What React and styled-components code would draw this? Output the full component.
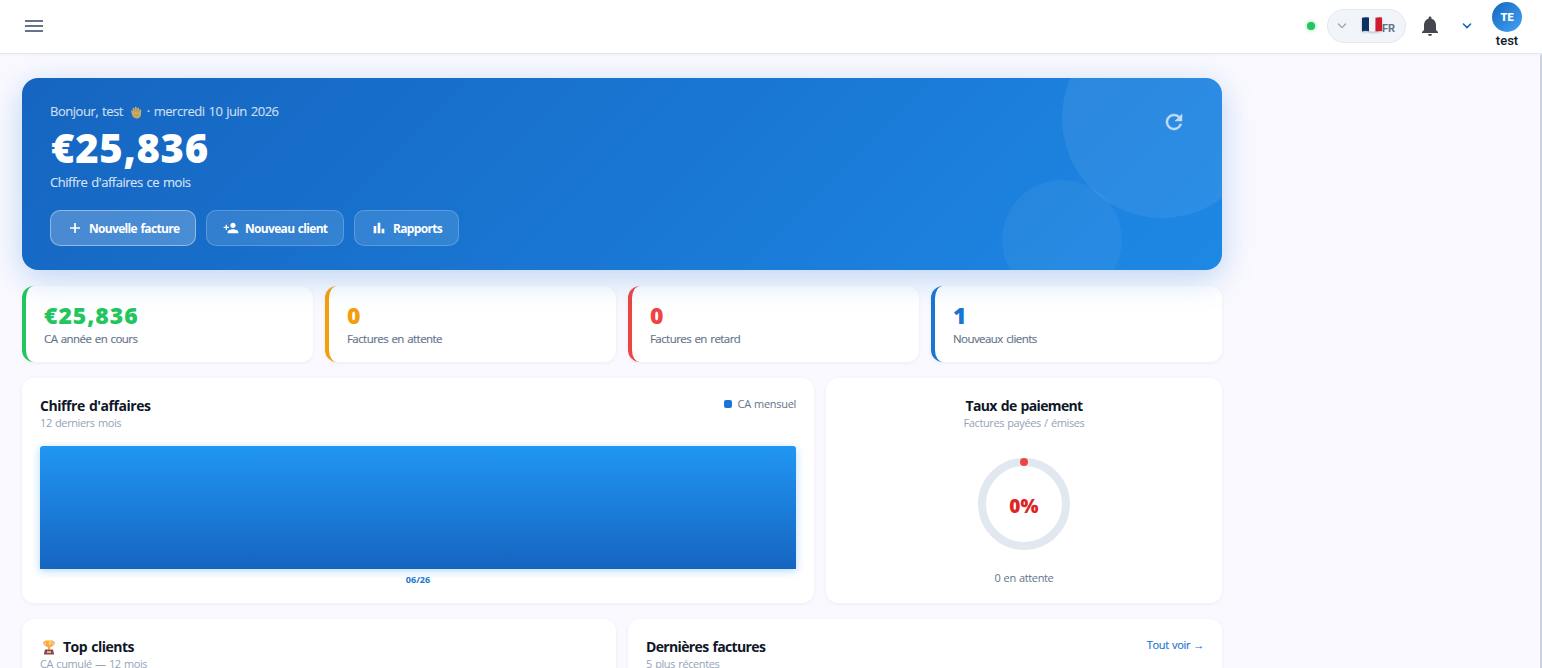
import React from 'react';
import styled, { createGlobalStyle } from 'styled-components';
import {
  MdBarChart,
  MdMenu,
  MdNotifications,
  MdPersonAdd,
} from 'react-icons/md';

const GlobalStyle = createGlobalStyle`
  * {
    box-sizing: border-box;
  }

  html, body, #root {
    height: 100%;
  }

  body {
    margin: 0;
    overflow: hidden;
    background: #faf9ff;
    font-family: 'Open Sans', 'Noto Sans', sans-serif;
    font-size: 13px;
    color: #0f172a;
  }
`;

const Page = styled.div`
  display: flex;
  flex-direction: column;
  height: 668px;
`;

const TopBar = styled.header`
  display: flex;
  flex: none;
  align-items: center;
  justify-content: space-between;
  height: 54px;
  padding: 0 20px 2px 22px;
  background: #fff;
  border-bottom: 1px solid #e2e8f0;
  box-shadow: 0 1px 3px rgba(0, 0, 0, 0.04);
  font-family: Roboto, sans-serif;
`;

const IconButton = styled.button`
  display: flex;
  padding: 0;
  border: none;
  background: none;
  color: ${(props) => props.$color};
  opacity: ${(props) => props.$opacity || 1};
  cursor: pointer;
`;

const TopActions = styled.div`
  display: flex;
  align-items: center;
`;

const StatusDot = styled.span`
  width: 8px;
  height: 8px;
  margin-right: 12px;
  border-radius: 50%;
  background: #22c55e;
  box-shadow: 0 0 4px rgba(34, 197, 94, 0.55);
`;

const LangPill = styled.div`
  display: flex;
  align-items: center;
  width: 79px;
  height: 34px;
  margin-right: 12px;
  padding-left: 9px;
  border: 1px solid #e2e8f0;
  border-radius: 17px;
  background: #f1f5f9;
`;

const Flag = styled.svg`
  margin: 0 0 3px 15px;
  filter: drop-shadow(0 1px 1px rgba(0, 0, 0, 0.25));
`;

const LangCode = styled.span`
  padding-top: 6px;
  font-size: 11px;
  font-weight: 700;
  line-height: 14px;
  letter-spacing: -0.1px;
  color: #64748b;
`;

const ChevronWrap = styled.span`
  display: flex;
  margin: 0 20px 0 20px;
`;

const User = styled.div`
  display: flex;
  flex-direction: column;
  align-items: center;
  width: 30px;
  margin-top: -1px;
`;

const Avatar = styled.div`
  width: 30px;
  height: 30px;
  border-radius: 50%;
  background: linear-gradient(135deg, #1565c0, #42a5f5);
  color: #fff;
  font-size: 11px;
  font-weight: 900;
  line-height: 31px;
  text-align: center;
`;

const UserName = styled.span`
  font-size: 13px;
  font-weight: 500;
  line-height: 16px;
  margin-top: 1px;
`;

const Body = styled.div`
  display: flex;
  flex: 1;
  justify-content: space-between;
  min-height: 0;
`;

const ScrollThumb = styled.div`
  width: 2px;
  background: #cbd5e1;
  border-radius: 2px 0 0 0;
`;

const Main = styled.main`
  width: 1280px;
  height: 614px;
  padding: 24px 58px 0 22px;
  overflow: hidden;
`;

const Hero = styled.section`
  position: relative;
  z-index: 1;
  height: 192px;
  padding: 24px 28px;
  border-radius: 16px;
  background: linear-gradient(135deg, #1565c0 0%, #1976d2 50%, #1e88e5 100%);
  box-shadow: 0 8px 32px rgba(25, 118, 210, 0.28);
  color: #fff;
`;

const Circles = styled.div`
  position: absolute;
  inset: 0;
  overflow: hidden;
  border-radius: 16px;

  &::before,
  &::after {
    content: '';
    position: absolute;
    border-radius: 50%;
  }

  &::before {
    top: -60px;
    right: -40px;
    width: 200px;
    height: 200px;
    background: rgba(255, 255, 255, 0.07);
  }

  &::after {
    bottom: -30px;
    right: 100px;
    width: 120px;
    height: 120px;
    background: rgba(255, 255, 255, 0.05);
  }
`;

const HeroTop = styled.div`
  position: relative;
  display: flex;
  justify-content: space-between;
`;

const RefreshWrap = styled.div`
  padding: 8px 8px 0 0;
`;

const Greeting = styled.div`
  display: flex;
  align-items: center;
  height: 18px;
  font-size: 13px;
  letter-spacing: -0.48px;
  word-spacing: 1px;
  color: rgba(255, 255, 255, 0.75);
  -webkit-text-stroke: 0.2px rgba(255, 255, 255, 0.6);
  white-space: pre;

  svg {
    margin: 2px 5px 0 7px;
    opacity: 0.8;
  }
`;

const Amount = styled.div`
  height: 53px;
  padding-left: 1px;
  font-size: 40px;
  font-weight: 800;
  line-height: 56px;
  letter-spacing: 0.7px;
`;

const HeroSub = styled.div`
  height: 18px;
  font-size: 13px;
  line-height: 18px;
  letter-spacing: -0.48px;
  word-spacing: 1px;
  color: rgba(255, 255, 255, 0.8);
  -webkit-text-stroke: 0.2px rgba(255, 255, 255, 0.6);
`;

const HeroActions = styled.div`
  position: relative;
  display: flex;
  gap: 10px;
  margin-top: 19px;
`;

const HeroButton = styled.button`
  display: flex;
  align-items: center;
  gap: 6px;
  width: ${(props) => props.$width}px;
  height: 36px;
  padding: 0 0 0 16px;
  border: 1px solid rgba(255, 255, 255, ${(props) => (props.$primary ? 0.4 : 0.2)});
  border-radius: 10px;
  background: rgba(255, 255, 255, ${(props) => (props.$primary ? 0.22 : 0.12)});
  color: #fff;
  font-family: inherit;
  font-size: 12px;
  font-weight: 700;
  letter-spacing: -0.68px;
  word-spacing: 1px;
  white-space: nowrap;
  cursor: pointer;
`;

const KpiGrid = styled.section`
  display: grid;
  grid-template-columns: repeat(4, 1fr);
  gap: 12px;
  margin-top: 16px;
`;

const KpiCard = styled.div`
  height: 76px;
  padding: 14px 18px;
  border-left: 4px solid ${(props) => props.$color};
  border-radius: 12px;
  background: #fff;
  box-shadow: 0 1px 4px rgba(0, 0, 0, 0.06);
`;

const KpiValue = styled.div`
  height: 30px;
  font-size: 23px;
  font-weight: 800;
  line-height: 30px;
  letter-spacing: 0.95px;
  color: ${(props) => props.$color};
`;

const KpiLabel = styled.div`
  font-size: 11.5px;
  line-height: 18px;
  letter-spacing: -0.57px;
  word-spacing: 1px;
  color: #64748b;
  -webkit-text-stroke: 0.15px #64748b;
`;

const Row = styled.section`
  display: grid;
  grid-template-columns: ${(props) => props.$columns};
  gap: 12px;
  margin-top: 16px;
`;

const Card = styled.div`
  height: ${(props) => props.$height}px;
  padding: 18px;
  border-radius: 12px;
  background: #fff;
  box-shadow: 0 1px 4px rgba(0, 0, 0, 0.06);
  text-align: ${(props) => (props.$center ? 'center' : 'left')};
`;

const CardHead = styled.div`
  display: flex;
  justify-content: space-between;
  height: 34px;
`;

const CardTitle = styled.div`
  display: flex;
  align-items: center;
  justify-content: ${(props) => (props.$center ? 'center' : 'flex-start')};
  gap: 7px;
  height: 20px;
  padding-bottom: 1px;
  font-size: 14px;
  font-weight: 700;
  letter-spacing: ${(props) => props.$tracking || -0.65}px;
  word-spacing: 1px;

  svg {
    margin: 1px 1px 0 3px;
  }
`;

const CardSub = styled.div`
  font-size: 11px;
  line-height: 14px;
  letter-spacing: -0.4px;
  word-spacing: 0.8px;
  color: #94a3b8;
`;

const Legend = styled.div`
  display: flex;
  align-items: center;
  gap: 6px;
  height: 16px;
  font-size: 11px;
  line-height: 14px;
  letter-spacing: -0.3px;
  word-spacing: 0.6px;
  color: #64748b;

  &::before {
    content: '';
    width: 8px;
    height: 8px;
    border-radius: 2px;
    background: #1976d2;
  }
`;

const Bar = styled.div`
  height: 123px;
  margin-top: 16px;
  border-radius: 3px 3px 0 0;
  background: linear-gradient(180deg, #2196f3, #1565c0);
  box-shadow: 0 2px 8px rgba(33, 150, 243, 0.35);
`;

const BarLabel = styled.div`
  margin-top: 5px;
  font-size: 9px;
  font-weight: 700;
  line-height: 12px;
  text-align: center;
  color: #1976d2;
`;

const Donut = styled.div`
  display: grid;
  place-items: center;
  height: 100px;
  margin-top: 24px;

  > * {
    grid-area: 1 / 1;
  }
`;

const DonutValue = styled.span`
  padding-top: 3px;
  font-size: 19px;
  font-weight: 800;
  letter-spacing: 0.1px;
  color: #dc2626;
`;

const Pending = styled.div`
  margin-top: 17px;
  font-size: 11px;
  line-height: 14px;
  letter-spacing: -0.35px;
  word-spacing: 0.6px;
  color: #64748b;
`;

const SeeAll = styled.a`
  height: 16px;
  font-size: 11px;
  line-height: 16px;
  letter-spacing: -0.3px;
  word-spacing: 0.6px;
  color: #1976d2;
  -webkit-text-stroke: 0.15px #1976d2;
`;

const kpis = [
  { value: '€25,836', label: 'CA année en cours', color: '#22c55e' },
  { value: '0', label: 'Factures en attente', color: '#f59e0b' },
  { value: '0', label: 'Factures en retard', color: '#ef4444' },
  { value: '1', label: 'Nouveaux clients', color: '#1976d2' },
];

const Chevron = ({ color, strokeWidth }) => (
  <svg width="10" height="6" viewBox="0 0 10 6" fill="none">
    <path d="M1.4 1 5 4.600 8.600 1" stroke={color} strokeWidth={strokeWidth} strokeLinecap="round" strokeLinejoin="round" />
  </svg>
);

const PlusIcon = () => (
  <svg width="16" height="16" viewBox="0 0 16 16">
    <path d="M8 3v10M3 8h10" stroke="currentColor" strokeWidth="1.7" />
  </svg>
);

const RefreshIcon = () => (
  <svg width="24" height="24" viewBox="0 0 24 24" fill="currentColor">
    <path
      d="M17.650 6.350A7.958 7.958 0 0 0 12 4c-4.420 0-7.990 3.580-7.990 8s3.570 8 7.990 8c3.730 0 6.840-2.550 7.730-6h-2.080A5.990 5.990 0 0 1 12 18c-3.310 0-6-2.690-6-6s2.690-6 6-6c1.660 0 3.140.69 4.220 1.780L13 11h7V4z"
      stroke="currentColor"
      strokeWidth="0.5"
    />
  </svg>
);

const FrenchFlag = () => (
  <Flag width="20" height="15" viewBox="0 0 20 15">
    <path d="M0 .8Q3.5-.4 7 .6V14.2Q3.5 13.4 0 14.4Z" fill="#0b3263" />
    <path d="M7 .6q3 .8 6.500.2V14.500q-3.500.4-6.500-.3Z" fill="#f1f3f6" />
    <path d="M13.500.8Q17 0 20 .5V14q-3-.4-6.500.5Z" fill="#d01c30" />
  </Flag>
);

const WavingHand = () => (
  <svg width="12" height="13" viewBox="0 0 12 13">
    <path
      d="M1 4.600 2.100 4.200 3 5.300 2.500 2.200 3.700 1.600 4.700 3.600 5 .8 6.300.7 7 3.300 7.900 1.400 9 1.800 9.300 4.500 10.300 3.300 11.300 3.900 11 8.500Q10.500 12.200 7 12.500 3.800 12.500 2.200 9.500Z"
      fill="#f5bb52"
    />
    <path d="m3.700 3 1.600 3M6 2.300l.8 3.200M8.200 3.500v2.700M4.200 8.500Q5.800 10.800 8.500 9" stroke="#c98a35" strokeWidth=".6" fill="none" />
  </svg>
);

const Trophy = () => (
  <svg width="12" height="15" viewBox="0 0 12 15">
    <path d="M2.500 2H.7q-.1 3.700 3 4M9.500 2h1.800q.1 3.700-3 4" stroke="#e8923a" strokeWidth="1" fill="none" />
    <path d="M2.200.6h7.600Q10 6.500 7 7.600V9.500H5V7.600Q2 6.500 2.200.6Z" fill="#f9a83c" />
    <path d="M5.500 1.200h3Q8.500 4.500 6.500 6Z" fill="#ffd968" />
    <path d="M2 9.500h8l1.200 5H.8Z" fill="#87485b" />
    <path d="M4 11.200h4v1.800H4Z" fill="#f7c452" />
  </svg>
);

const App = () => {
  return (
    <Page>
      <GlobalStyle />
      <TopBar>
        <IconButton $color="#64748b" aria-label="Menu">
          <MdMenu size={24} />
        </IconButton>
        <TopActions>
          <StatusDot />
          <LangPill>
            <Chevron color="#94a3b8" strokeWidth={1.3} />
            <FrenchFlag />
            <LangCode>FR</LangCode>
          </LangPill>
          <IconButton $color="#44474e" aria-label="Notifications">
            <MdNotifications size={24} />
          </IconButton>
          <ChevronWrap>
            <Chevron color="#1565c0" strokeWidth={1.5} />
          </ChevronWrap>
          <User>
            <Avatar>TE</Avatar>
            <UserName>test</UserName>
          </User>
        </TopActions>
      </TopBar>

      <Body>
        <Main>
          <Hero>
            <Circles />
            <HeroTop>
              <div>
                <Greeting>
                  Bonjour, test
                  <WavingHand />
                  · mercredi 10 juin 2026
                </Greeting>
                <Amount>€25,836</Amount>
                <HeroSub>Chiffre d'affaires ce mois</HeroSub>
              </div>
              <RefreshWrap>
                <IconButton $color="#fff" $opacity={0.7} aria-label="Actualiser">
                  <RefreshIcon />
                </IconButton>
              </RefreshWrap>
            </HeroTop>
            <HeroActions>
              <HeroButton $primary $width={146}>
                <PlusIcon />
                Nouvelle facture
              </HeroButton>
              <HeroButton $width={138}>
                <MdPersonAdd size={16} />
                Nouveau client
              </HeroButton>
              <HeroButton $width={105}>
                <MdBarChart size={16} />
                Rapports
              </HeroButton>
            </HeroActions>
          </Hero>

          <KpiGrid>
            {kpis.map((kpi) => (
              <KpiCard key={kpi.label} $color={kpi.color}>
                <KpiValue $color={kpi.color}>{kpi.value}</KpiValue>
                <KpiLabel>{kpi.label}</KpiLabel>
              </KpiCard>
            ))}
          </KpiGrid>

          <Row $columns="2fr 1fr">
            <Card $height={225}>
              <CardHead>
                <div>
                  <CardTitle $tracking={-0.45}>Chiffre d'affaires</CardTitle>
                  <CardSub>12 derniers mois</CardSub>
                </div>
                <Legend>CA mensuel</Legend>
              </CardHead>
              <Bar />
              <BarLabel>06/26</BarLabel>
            </Card>
            <Card $height={225} $center>
              <CardTitle $center>Taux de paiement</CardTitle>
              <CardSub>Factures payées / émises</CardSub>
              <Donut>
                <svg width="100" height="100" viewBox="0 0 100 100">
                  <circle cx="50" cy="50" r="42" fill="none" stroke="#e2e8f0" strokeWidth="8" />
                  <circle cx="50" cy="8" r="4" fill="#ef4444" />
                </svg>
                <DonutValue>0%</DonutValue>
              </Donut>
              <Pending>0 en attente</Pending>
            </Card>
          </Row>

          <Row $columns="1fr 1fr">
            <Card $height={240}>
              <CardTitle $tracking={-0.5}>
                <Trophy />
                Top clients
              </CardTitle>
              <CardSub>CA cumulé — 12 mois</CardSub>
            </Card>
            <Card $height={240}>
              <CardHead>
                <div>
                  <CardTitle>Dernières factures</CardTitle>
                  <CardSub>5 plus récentes</CardSub>
                </div>
                <SeeAll>Tout voir →</SeeAll>
              </CardHead>
            </Card>
          </Row>
        </Main>
        <ScrollThumb />
      </Body>
    </Page>
  );
};

export default App;
